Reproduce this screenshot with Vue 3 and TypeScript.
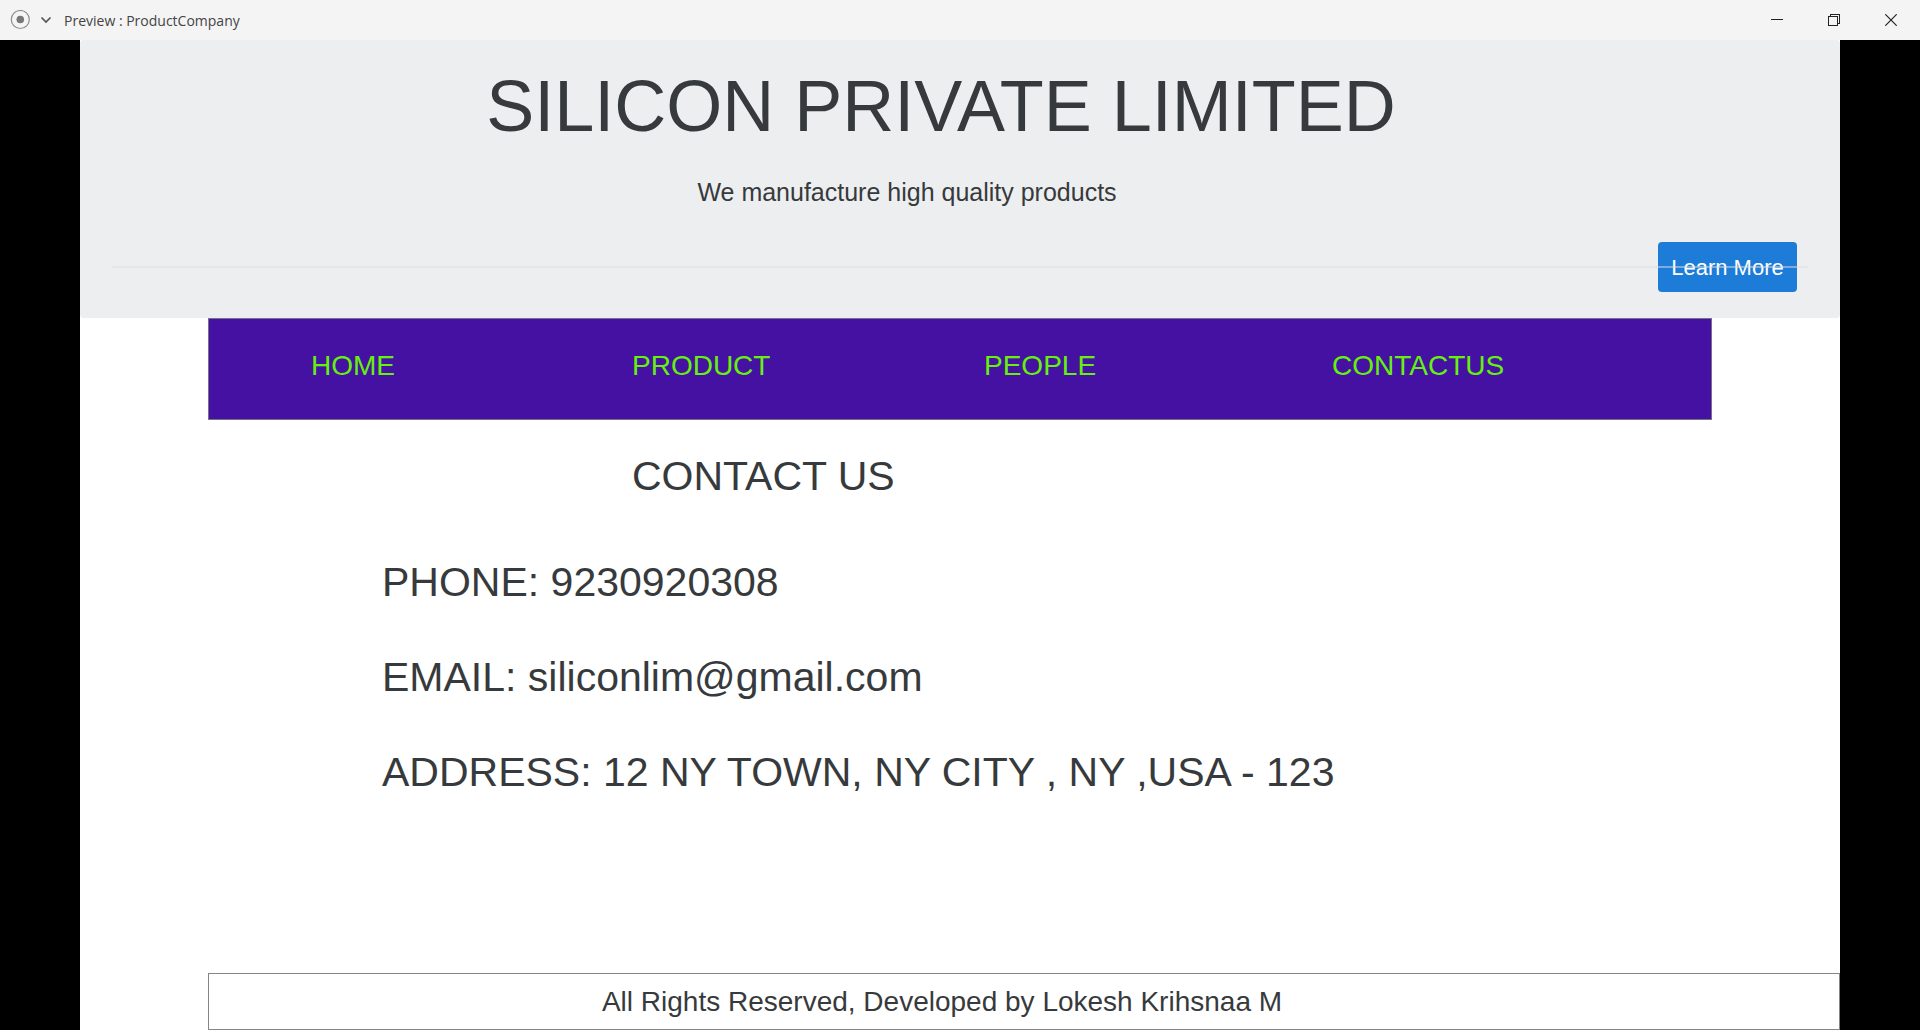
<script setup lang="ts">
interface NavItem {
  label: string
  href: string
}

const navItems: NavItem[] = [
  { label: 'HOME', href: '#home' },
  { label: 'PRODUCT', href: '#product' },
  { label: 'PEOPLE', href: '#people' },
  { label: 'CONTACTUS', href: '#contactus' },
]

const details: string[] = [
  'PHONE: 9230920308',
  'EMAIL: siliconlim@gmail.com',
  'ADDRESS: 12 NY TOWN, NY CITY , NY ,USA - 123',
]
</script>

<template>
  <div class="window">
    <div class="titlebar">
      <svg class="record" width="20" height="20" viewBox="0 0 20 20" aria-hidden="true">
        <circle cx="10.300" cy="9.500" r="9" fill="none" stroke="#8c8c8c" stroke-width="1.200" />
        <circle cx="10.300" cy="9.500" r="3.800" fill="#777" />
      </svg>
      <button class="chevron" type="button" aria-label="Preview menu">
        <svg width="12" height="8" viewBox="0 0 12 8">
          <path d="M1.500 1.500 6 6l4.500-4.500" fill="none" stroke="#555" stroke-width="1.700" />
        </svg>
      </button>
      <span class="caption">Preview : ProductCompany</span>
      <div class="controls">
        <button type="button" aria-label="Minimize">
          <svg width="12" height="12" viewBox="0 0 12 12" shape-rendering="crispEdges">
            <path d="M0 5.500H12" stroke="#222" />
          </svg>
        </button>
        <button type="button" aria-label="Restore">
          <svg width="12" height="12" viewBox="0 0 12 12" shape-rendering="crispEdges">
            <path d="M.5 2.500h9v9h-9zM2.500 2.500v-2h9v9h-2" fill="none" stroke="#222" />
          </svg>
        </button>
        <button type="button" aria-label="Close">
          <svg width="12" height="12" viewBox="0 0 12 12">
            <path d="M.3.3 11.700 11.700M11.700.3.3 11.700" stroke="#222" stroke-width="1.200" />
          </svg>
        </button>
      </div>
    </div>

    <div class="stage">
      <div class="page">
        <header class="banner">
          <h1>SILICON PRIVATE LIMITED</h1>
          <p class="tagline">We manufacture high quality products</p>
          <div class="actions">
            <button class="learn" type="button">Learn More</button>
            <hr class="rule" />
          </div>
        </header>

        <nav class="menu">
          <a v-for="item in navItems" :key="item.label" :href="item.href">{{ item.label }}</a>
        </nav>

        <main class="contact">
          <h2>CONTACT US</h2>
          <div class="details">
            <p v-for="line in details" :key="line">{{ line }}</p>
          </div>
        </main>

        <footer class="footer">All Rights Reserved, Developed by Lokesh Krihsnaa M</footer>
      </div>
    </div>
  </div>
</template>

<style>
body {
  margin: 0;
  background: #000;
}
</style>

<style scoped>
.window {
  display: flex;
  flex-direction: column;
  min-height: 100vh;
  font-family: 'Liberation Sans', Arial, sans-serif;
  color: #373a3c;
}

h1,
h2,
p {
  margin: 0;
  font-weight: 400;
}

button {
  padding: 0;
  border: 0;
  background: none;
  font: inherit;
}

svg {
  display: block;
}

.titlebar {
  display: flex;
  align-items: center;
  height: 40px;
  padding: 0 1px 0 10px;
  background: #f4f4f4;
}

.chevron {
  margin: 0 12px 0 10px;
}

.caption {
  font-family: 'Open Sans', 'Noto Sans', sans-serif;
  font-size: 14px;
  color: #444;
}

.controls {
  display: flex;
  height: 40px;
  margin-left: auto;
}

.controls button {
  display: flex;
  align-items: center;
  justify-content: center;
  width: 57px;
}

.stage {
  display: flex;
  flex: 1;
  padding: 0 80px;
  background: #000;
}

.page {
  display: flex;
  flex: 1;
  flex-direction: column;
  background: #fff;
}

.banner {
  padding: 26px 32px;
  border-radius: 4px;
  background: #eceeef;
}

h1 {
  padding-right: 38px;
  font-size: 72px;
  line-height: 80px;
  text-align: center;
}

.tagline {
  margin-top: 30px;
  padding-right: 106px;
  font-size: 25px;
  line-height: 32px;
  text-align: center;
}

.actions {
  position: relative;
  display: flex;
  justify-content: flex-end;
  margin-top: 34px;
  padding-right: 11px;
}

.learn {
  width: 139px;
  height: 50px;
  padding-top: 1px;
  border-radius: 4px;
  background: #1c7cd8;
  color: #fff;
  font-size: 22px;
}

.rule {
  position: absolute;
  top: 24px;
  right: 0;
  left: 0;
  height: 2px;
  margin: 0;
  border: 0;
  background: rgb(220 221 224 / 50%);
}

.menu {
  display: grid;
  grid-template-columns: 321fr 352fr 348fr 379fr;
  margin: 0 128px;
  padding: 31px 0 37px 102px;
  border: 1px solid #76708c;
  background: #4411a3;
}

.menu a {
  color: #66f00c;
  font-size: 28px;
  line-height: 32px;
  text-decoration: none;
}

.contact {
  padding: 32px 0 48px;
  font-size: 41px;
  line-height: 48px;
}

h2 {
  margin-left: 552px;
  font-size: 41px;
}

.details {
  display: flex;
  flex-direction: column;
  gap: 47px;
  margin: 58px 0 0 302px;
}

.footer {
  margin: auto 0 0 128px;
  padding: 12px 164px 11px 0;
  border: 1px solid #86848a;
  font-size: 28px;
  line-height: 32px;
  text-align: center;
}
</style>
